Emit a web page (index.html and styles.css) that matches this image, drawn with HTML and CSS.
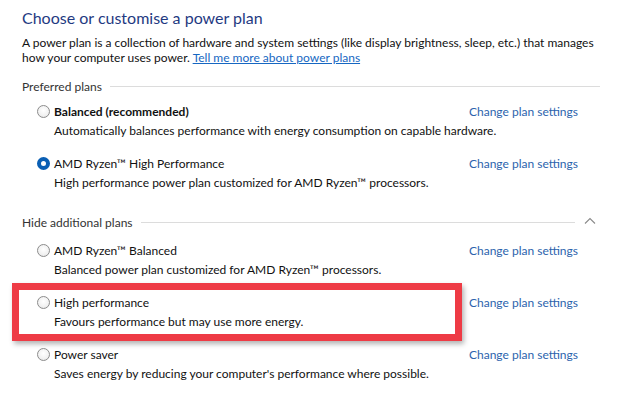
FILE: index.html
```html
<!DOCTYPE html>
<html>
<head>
<meta charset="utf-8">
<link rel="stylesheet" href="styles.css">
</head>
<body>
<div class="page">
  <h1 class="title">Choose or customise a power plan</h1>
  <p class="intro">A power plan is a collection of hardware and system settings (like display brightness, sleep, etc.) that manages how your computer uses power. <a class="link" href="#">Tell me more about power plans</a></p>

  <div class="group-head first">
    <span class="group-label">Preferred plans</span>
    <span class="rule"></span>
  </div>
  <div class="plans">
    <div class="plan">
      <span class="radio"></span>
      <span class="name bold">Balanced (recommended)</span>
      <a class="change" href="#">Change plan settings</a>
      <span class="desc">Automatically balances performance with energy consumption on capable hardware.</span>
    </div>
    <div class="plan">
      <span class="radio checked"></span>
      <span class="name">AMD Ryzen™ High Performance</span>
      <a class="change" href="#">Change plan settings</a>
      <span class="desc">High performance power plan customized for AMD Ryzen™ processors.</span>
    </div>
  </div>

  <div class="group-head second">
    <span class="group-label">Hide additional plans</span>
    <span class="rule"></span>
    <svg class="chev" width="12" height="8" viewBox="0 0 12 8"><path d="M1 6.5 L6 1.5 L11 6.5" fill="none" stroke="#8a8a8a" stroke-width="1.1"/></svg>
  </div>
  <div class="plans second-plans">
    <div class="plan">
      <span class="radio"></span>
      <span class="name">AMD Ryzen™ Balanced</span>
      <a class="change" href="#">Change plan settings</a>
      <span class="desc">Balanced power plan customized for AMD Ryzen™ processors.</span>
    </div>
    <div class="plan highlighted">
      <span class="radio"></span>
      <span class="name">High performance</span>
      <a class="change" href="#">Change plan settings</a>
      <span class="desc">Favours performance but may use more energy.</span>
      <span class="mark"></span>
    </div>
    <div class="plan">
      <span class="radio"></span>
      <span class="name">Power saver</span>
      <a class="change" href="#">Change plan settings</a>
      <span class="desc">Saves energy by reducing your computer's performance where possible.</span>
    </div>
  </div>
</div>
</body>
</html>
```

FILE: styles.css
```css
html, body {
  margin: 0;
  padding: 0;
  background: #ffffff;
}
body {
  font-family: "Lato", "Noto Sans", sans-serif;
  font-size: 12px;
  color: #111111;
  width: 632px;
  height: 417px;
  overflow: hidden;
}
.page {
  padding: 6px 0 0 22px;
}
.title {
  margin: 0;
  font-weight: 400;
  font-size: 16px;
  line-height: 24px;
  color: #1f3a82;
}
.intro {
  margin: 5px 0 0 0;
  width: 576px;
  line-height: 15px;
}
.link {
  color: #1667c2;
  text-decoration: underline;
}
.group-head {
  display: flex;
  align-items: center;
  width: 578px;
  height: 18px;
  color: #333333;
}
.group-head.first {
  margin-top: 12px;
}
.group-head.second {
  margin-top: 21px;
}
.group-label {
  white-space: nowrap;
}
.rule {
  display: block;
  flex: 1;
  height: 1px;
  margin-left: 8px;
  background: #dcdcdc;
}
.chev {
  margin-left: 9px;
  margin-right: 4px;
  margin-top: -2px;
}
.plans {
  display: flex;
  flex-direction: column;
  gap: 14px;
  margin-top: 7px;
  padding-left: 15px;
}
.second-plans {
  margin-top: 10px;
}
.plan {
  position: relative;
  display: grid;
  grid-template-columns: 17px 415px auto;
  grid-template-rows: 19px 19px;
  align-items: center;
}
.radio {
  grid-column: 1;
  grid-row: 1;
  width: 11px;
  height: 11px;
  border: 1px solid #8c8c8c;
  border-radius: 50%;
  background: radial-gradient(circle at 50% 40%, #ffffff 0%, #f1f1f1 60%, #dedede 100%);
}
.radio.checked {
  width: 5px;
  height: 5px;
  border: 4px solid #0a5fb4;
  background: #ffffff;
}
.name {
  grid-column: 2;
  grid-row: 1;
}
.name.bold {
  font-weight: 700;
}
.desc {
  grid-column: 2 / 4;
  grid-row: 2;
  white-space: nowrap;
}
.change {
  grid-column: 3;
  grid-row: 1;
  color: #2c63ad;
  text-decoration: none;
  white-space: nowrap;
}
.mark {
  position: absolute;
  left: -25px;
  top: -10px;
  width: 436px;
  height: 44px;
  border: 7px solid #ee3b45;
  box-shadow: 2px 3px 5px rgba(0, 0, 0, 0.3);
  pointer-events: none;
}
```
